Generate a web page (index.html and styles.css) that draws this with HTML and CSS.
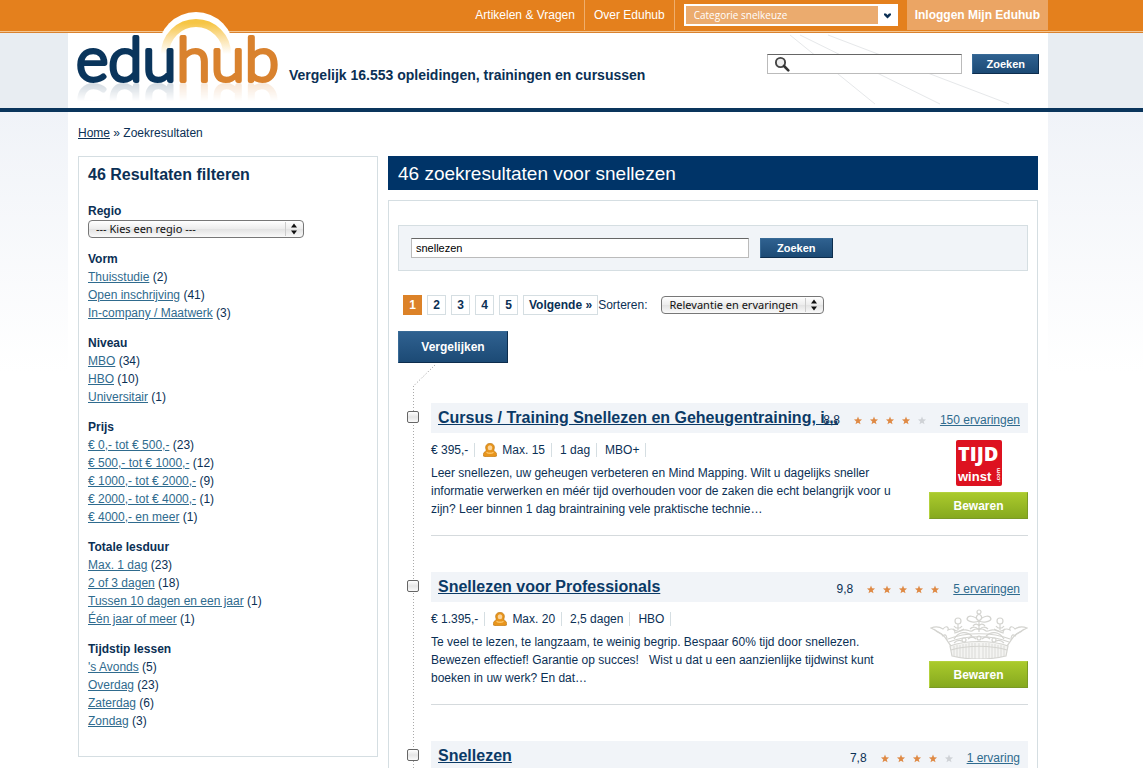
FILE: index.html
```html
<!DOCTYPE html>
<html lang="nl">
<head>
    <meta charset="UTF-8">
    <meta name="viewport" content="width=device-width, initial-scale=1.0">
    <title>Snellezen - Eduhub</title>
    <link rel="stylesheet" href="styles.css">
</head>
<body>
    <!-- icons used more than once -->
    <svg class="sprite" aria-hidden="true">
        <symbol id="star" viewBox="0 0 10 10">
            <path d="M5 0.6 6.2 3.7 9.5 3.9 6.9 6 7.8 9.3 5 7.5 2.2 9.3 3.1 6 0.5 3.9 3.8 3.7Z"/>
        </symbol>
        <symbol id="person" viewBox="0 0 14 14">
            <path d="M0.600 13.200C0 11 0.500 9.600 2 8.700 3.200 8 3.300 7.400 3 6.500 2.400 4.500 2.600 3 3.600 1.800 4.400 0.800 5.600 0.500 7 0.500S9.600 0.800 10.400 1.800C11.400 3 11.600 4.500 11 6.500 10.700 7.400 10.800 8 12 8.700 13.500 9.600 14 11 13.400 13.200 11 14 3 14 0.600 13.200Z" fill="#e8951c" stroke="#bf7a18" stroke-width="0.7"/>
            <ellipse cx="7" cy="4.700" rx="2.300" ry="2.500" fill="#fbd49a"/>
            <path d="M3.500 9.200C5.200 10.600 8.800 10.600 10.500 9.200" fill="none" stroke="#fbc468" stroke-width="1.300"/>
        </symbol>
    </svg>

    <div class="topbar">
        <div class="wrap topbar-inner">
            <nav class="topnav">
                <a href="#">Artikelen &amp; Vragen</a>
                <a href="#">Over Eduhub</a>
            </nav>
            <select class="category" aria-label="Categorie snelkeuze">
                <option>Categorie snelkeuze</option>
            </select>
            <a class="login" href="#">Inloggen Mijn Eduhub</a>
        </div>
    </div>

    <header class="header">
        <div class="wrap header-inner">
            <a class="logo" href="#">
                <svg class="logo-arc" viewBox="0 0 76 76" aria-hidden="true">
                    <defs>
                        <linearGradient id="arc" x1="0" y1="0" x2="0" y2="1">
                            <stop offset="0" stop-color="#f6c544"/>
                            <stop offset="0.45" stop-color="#fbdf9f"/>
                            <stop offset="1" stop-color="#ffffff"/>
                        </linearGradient>
                    </defs>
                    <circle cx="38" cy="38" r="38" fill="#fff"/>
                    <path d="M7 42A31 31 0 0 1 69 42" fill="none" stroke="url(#arc)" stroke-width="8"/>
                </svg>
                <svg class="logo-text" viewBox="0 0 202 48">
                    <text x="-1" y="45"><tspan class="logo-edu">edu</tspan><tspan class="logo-hub">hub</tspan></text>
                </svg>
            </a>
            <p class="tagline">Vergelijk 16.553 opleidingen, trainingen en cursussen</p>
            <form class="site-search">
                <div class="search-field">
                    <svg viewBox="0 0 16 16" aria-hidden="true">
                        <circle cx="6.5" cy="6.5" r="4.6" fill="#eee" stroke="#444" stroke-width="1.9"/>
                        <path d="M10 10 14.3 14.3" stroke="#333" stroke-width="2.6" stroke-linecap="round"/>
                    </svg>
                    <input type="text" aria-label="Zoeken">
                </div>
                <button class="btn" type="button">Zoeken</button>
            </form>
        </div>
    </header>

    <div class="page">
        <div class="wrap content">
            <p class="breadcrumb"><a href="#">Home</a> » Zoekresultaten</p>

            <div class="columns">
                <aside class="filters">
                    <h2>46 Resultaten filteren</h2>

                    <div class="filter">
                        <label for="regio">Regio</label>
                        <select class="mac-select" id="regio">
                            <option>--- Kies een regio ---</option>
                        </select>
                    </div>
                    <div class="filter">
                        <h3>Vorm</h3>
                        <ul>
                            <li><a href="#">Thuisstudie</a> (2)</li>
                            <li><a href="#">Open inschrijving</a> (41)</li>
                            <li><a href="#">In-company / Maatwerk</a> (3)</li>
                        </ul>
                    </div>
                    <div class="filter">
                        <h3>Niveau</h3>
                        <ul>
                            <li><a href="#">MBO</a> (34)</li>
                            <li><a href="#">HBO</a> (10)</li>
                            <li><a href="#">Universitair</a> (1)</li>
                        </ul>
                    </div>
                    <div class="filter">
                        <h3>Prijs</h3>
                        <ul>
                            <li><a href="#">€ 0,- tot € 500,-</a> (23)</li>
                            <li><a href="#">€ 500,- tot € 1000,-</a> (12)</li>
                            <li><a href="#">€ 1000,- tot € 2000,-</a> (9)</li>
                            <li><a href="#">€ 2000,- tot € 4000,-</a> (1)</li>
                            <li><a href="#">€ 4000,- en meer</a> (1)</li>
                        </ul>
                    </div>
                    <div class="filter">
                        <h3>Totale lesduur</h3>
                        <ul>
                            <li><a href="#">Max. 1 dag</a> (23)</li>
                            <li><a href="#">2 of 3 dagen</a> (18)</li>
                            <li><a href="#">Tussen 10 dagen en een jaar</a> (1)</li>
                            <li><a href="#">Één jaar of meer</a> (1)</li>
                        </ul>
                    </div>
                    <div class="filter">
                        <h3>Tijdstip lessen</h3>
                        <ul>
                            <li><a href="#">'s Avonds</a> (5)</li>
                            <li><a href="#">Overdag</a> (23)</li>
                            <li><a href="#">Zaterdag</a> (6)</li>
                            <li><a href="#">Zondag</a> (3)</li>
                        </ul>
                    </div>
                </aside>

                <main class="main">
                    <h1>46 zoekresultaten voor snellezen</h1>

                    <div class="panel">
                        <form class="search-box">
                            <input type="text" value="snellezen" aria-label="Zoekterm">
                            <button class="btn" type="button">Zoeken</button>
                        </form>

                        <div class="toolbar">
                            <nav class="pages">
                                <a class="current" href="#">1</a>
                                <a href="#">2</a>
                                <a href="#">3</a>
                                <a href="#">4</a>
                                <a href="#">5</a>
                                <a href="#">Volgende »</a>
                            </nav>
                            <label for="sort">Sorteren:</label>
                            <select class="mac-select" id="sort">
                                <option>Relevantie en ervaringen</option>
                            </select>
                        </div>

                        <button class="btn compare" type="button">Vergelijken</button>
                        <svg class="connector" viewBox="0 0 24 22" aria-hidden="true">
                            <path d="M22 1 0.5 22" fill="none" stroke="#999" stroke-dasharray="1 2"/>
                        </svg>

                        <div class="results">
                            <article class="result">
                                <input type="checkbox" aria-label="Vergelijk Cursus / Training Snellezen en Geheugentraining">
                                <div class="result-main">
                                    <div class="result-head">
                                        <h2><a href="#">Cursus / Training Snellezen en Geheugentraining, i...</a></h2>
                                        <div class="rating">
                                            <span>8,8</span>
                                            <span class="stars">
                                                <svg><use href="#star"/></svg><svg><use href="#star"/></svg><svg><use href="#star"/></svg><svg><use href="#star"/></svg><svg class="off"><use href="#star"/></svg>
                                            </span>
                                            <a href="#">150 ervaringen</a>
                                        </div>
                                    </div>
                                    <div class="result-body">
                                        <div class="result-text">
                                            <ul class="meta">
                                                <li>€ 395,-</li>
                                                <li><svg><use href="#person"/></svg>Max. 15</li>
                                                <li>1 dag</li>
                                                <li>MBO+</li>
                                            </ul>
                                            <p>Leer snellezen, uw geheugen verbeteren en Mind Mapping. Wilt u dagelijks sneller informatie verwerken en méér tijd overhouden voor de zaken die echt belangrijk voor u zijn? Leer binnen 1 dag braintraining vele praktische technie…</p>
                                        </div>
                                        <div class="provider">
                                            <svg class="tijdwinst" viewBox="0 0 46 46">
                                                <rect width="46" height="46" rx="2" fill="#dd1220"/>
                                                <text class="tijd" x="2" y="21">TIJD</text>
                                                <text class="winst" x="2" y="41">winst</text>
                                                <text class="com" transform="translate(44 42) rotate(-90)">.com</text>
                                            </svg>
                                            <button class="save" type="button">Bewaren</button>
                                        </div>
                                    </div>
                                </div>
                            </article>

                            <article class="result">
                                <input type="checkbox" aria-label="Vergelijk Snellezen voor Professionals">
                                <div class="result-main">
                                    <div class="result-head">
                                        <h2><a href="#">Snellezen voor Professionals</a></h2>
                                        <div class="rating">
                                            <span>9,8</span>
                                            <span class="stars">
                                                <svg><use href="#star"/></svg><svg><use href="#star"/></svg><svg><use href="#star"/></svg><svg><use href="#star"/></svg><svg><use href="#star"/></svg>
                                            </span>
                                            <a href="#">5 ervaringen</a>
                                        </div>
                                    </div>
                                    <div class="result-body">
                                        <div class="result-text">
                                            <ul class="meta">
                                                <li>€ 1.395,-</li>
                                                <li><svg><use href="#person"/></svg>Max. 20</li>
                                                <li>2,5 dagen</li>
                                                <li>HBO</li>
                                            </ul>
                                            <p>Te veel te lezen, te langzaam, te weinig begrip. Bespaar 60% tijd door snellezen. Bewezen effectief! Garantie op succes! &nbsp; Wist u dat u een aanzienlijke tijdwinst kunt boeken in uw werk? En dat…</p>
                                        </div>
                                        <div class="provider">
                                            <svg class="crown" viewBox="0 0 98 50" aria-hidden="true">
                                                <g fill="none" stroke="#d4d4d0" stroke-width="1.2">
                                                    <!-- band -->
                                                    <path d="M20 37C36 31 62 31 78 37L76 47C60 51 38 51 22 47Z" fill="#f4f4f2"/>
                                                    <path d="M19 33C36 26 62 26 79 33M18 30C36 23 62 23 80 30M21 41C38 36 60 36 77 41"/>
                                                    <path d="M24 37V47M27 36V48M30 36V48M33 35V49M36 35V49M39 34V49M42 34V49M45 34V50M49 34V50M53 34V50M56 34V49M59 34V49M62 35V49M65 35V49M68 36V48M71 36V48M74 37V47" stroke-width="0.8"/>
                                                    <!-- rim -->
                                                    <path d="M21 37C16 31 15 26 10 24 7 22 5 21 1 19 6 17 10 18 13 20 16 16 19 18 18 21 22 19 25 20 25 24 30 23 31 20 34 21 38 20 39 23 42 22 45 19 53 19 56 22 59 23 60 20 64 21 67 20 68 23 73 24 73 20 76 19 80 21 79 18 82 16 85 20 88 18 92 17 97 19 93 21 91 22 88 24 83 26 82 31 77 37"/>
                                                    <path d="M4 20C8 25 11 23 13 27 16 24 17 28 17 31M94 20C90 25 87 23 85 27 82 24 81 28 81 31M24 30C29 22 37 22 42 27M74 30C69 22 61 22 56 27"/>
                                                    <!-- side leaves -->
                                                    <circle cx="28" cy="12" r="3"/><circle cx="70" cy="12" r="3"/>
                                                    <path d="M28 15V21M24 17C26 20 30 20 32 17M23 20C26 23 31 23 34 20M70 15V21M66 17C68 20 72 20 74 17M64 20C67 23 72 23 75 20"/>
                                                    <!-- centre ornament -->
                                                    <circle cx="49" cy="3" r="2"/>
                                                    <path d="M49 5C45 7 46 11 49 12 52 11 53 7 49 5ZM49 12C44 6 38 6 37 10 38 13 45 14 49 12ZM49 12C54 6 60 6 61 10 60 13 53 14 49 12ZM49 12V23M43 17C45 14 48 15 49 17 50 15 53 14 55 17M40 20C44 16 47 19 49 21 51 19 54 16 58 20"/>
                                                    <circle cx="49" cy="29" r="2"/><circle cx="34" cy="31" r="2"/><circle cx="64" cy="31" r="2"/>
                                                    <path d="M38 30C41 27 44 28 46 30M52 30C54 28 57 27 60 30M24 34C27 31 30 31 32 32M66 32C68 31 71 31 74 34"/>
                                                </g>
                                            </svg>
                                            <button class="save" type="button">Bewaren</button>
                                        </div>
                                    </div>
                                </div>
                            </article>

                            <article class="result">
                                <input type="checkbox" aria-label="Vergelijk Snellezen">
                                <div class="result-main">
                                    <div class="result-head">
                                        <h2><a href="#">Snellezen</a></h2>
                                        <div class="rating">
                                            <span>7,8</span>
                                            <span class="stars">
                                                <svg><use href="#star"/></svg><svg><use href="#star"/></svg><svg><use href="#star"/></svg><svg><use href="#star"/></svg><svg class="off"><use href="#star"/></svg>
                                            </span>
                                            <a href="#">1 ervaring</a>
                                        </div>
                                    </div>
                                </div>
                            </article>
                        </div>
                    </div>
                </main>
            </div>
        </div>
    </div>
</body>
</html>
```

FILE: styles.css
```css
* {
    box-sizing: border-box;
}
body {
    margin: 0;
    font-family: "Liberation Sans", Arial, Helvetica, sans-serif;
    font-size: 12px;
    line-height: 18px;
    color: #0b3055;
    background: #fff;
}
h1, h2, h3, p, ul {
    margin: 0;
    padding: 0;
}
ul {
    list-style: none;
}
a {
    color: #2f6b8e;
}
input, select, button {
    margin: 0;
    font-family: inherit;
}
.sprite {
    display: none;
}
.wrap {
    max-width: 980px;
    margin-left: 68px;
}

/* top bar */
.topbar {
    height: 33px;
    background: linear-gradient(#e4801d 31px, #f3c592 31px, #f3c592 32px, #d9822e 32px);
}
.topbar-inner {
    display: flex;
    justify-content: flex-end;
    align-items: flex-start;
}
.topnav {
    display: flex;
}
.topnav a {
    padding: 6px 9px;
    line-height: 18px;
    color: #fff;
    text-decoration: none;
    border-right: 1px solid #efae6c;
}
.category {
    appearance: none;
    width: 214px;
    height: 22px;
    margin: 4px 9px 0;
    padding: 0 8px;
    font-family: "Open Sans", sans-serif;
    font-size: 10px;
    color: #fff;
    border: 2px solid #fff;
    border-radius: 0;
    background: #ebab6e url("data:image/svg+xml,%3Csvg xmlns='http://www.w3.org/2000/svg' width='18' height='18'%3E%3Crect width='18' height='18' fill='white'/%3E%3Cpath d='M6 7.5h2l1.500 1.500 1.500-1.500h2v1.500l-3.500 3.500-3.500-3.500z' fill='%230b3055'/%3E%3C/svg%3E") no-repeat right center;
}
.login {
    height: 30px;
    padding: 6px 8px;
    font-weight: bold;
    color: #fff;
    text-decoration: none;
    background: #eba564;
}

/* header */
.header {
    background: #e8edf2;
    border-bottom: 4px solid #0a355c;
}
.header-inner {
    display: flex;
    align-items: flex-end;
    height: 75px;
    padding: 0 9px 24px;
    background: #fff url("data:image/svg+xml,%3Csvg xmlns='http://www.w3.org/2000/svg' width='260' height='75'%3E%3Cg stroke='%23e6e8ea' fill='none'%3E%3Cpath d='M2 2 87 71M12 2 152 71M40 2 221 71'/%3E%3C/g%3E%3C/svg%3E") no-repeat right top;
}
.logo {
    position: relative;
    width: 202px;
    height: 48px;
}
.logo-arc {
    position: absolute;
    left: 81px;
    top: -24px;
    width: 76px;
    height: 76px;
}
.logo-text {
    position: relative;
    display: block;
    width: 202px;
    height: 48px;
    overflow: visible;
    -webkit-box-reflect: below -2px linear-gradient(transparent 60%, rgba(0, 0, 0, 0.2));
}
.logo-text text {
    font-family: Lato, sans-serif;
    font-size: 62px;
    font-weight: 300;
    stroke-width: 4;
    stroke-linejoin: round;
}
.logo-edu {
    fill: #0a355c;
    stroke: #0a355c;
}
.logo-hub {
    fill: #d9822e;
    stroke: #d9822e;
}
.tagline {
    margin-left: 10px;
    font-size: 14px;
    font-weight: bold;
}
.site-search {
    display: flex;
    gap: 10px;
    margin: 0 0 10px auto;
}
.search-field {
    display: flex;
    align-items: center;
    width: 195px;
    height: 20px;
    padding-left: 6px;
    background: #fff;
    border: 1px solid #bbb;
    border-top-color: #666;
}
.search-field svg {
    flex: none;
    width: 16px;
    height: 16px;
}
.search-field input {
    flex: 1;
    min-width: 0;
    border: 0;
    outline: 0;
    background: none;
}
.btn {
    height: 20px;
    padding: 0 13px;
    font-size: 11px;
    font-weight: bold;
    color: #fff;
    background: linear-gradient(#2f6190, #1c4a75);
    border: 1px solid #0d2d4d;
    border-top-color: #386a96;
    border-left-color: #386a96;
}

/* content */
.page {
    background: linear-gradient(#f0f3f8, #fff 260px);
}
.content {
    padding: 12px 10px 0;
    background: #fff;
}
.breadcrumb a {
    color: #0b3055;
}
.columns {
    display: grid;
    grid-template-columns: 300px 1fr;
    align-items: start;
    gap: 10px;
    margin-top: 14px;
}
.filters {
    padding: 9px 9px 26px;
    border: 1px solid #d5dee2;
}
.filters h2 {
    margin-bottom: 18px;
    font-size: 16px;
    line-height: 18px;
}
.filter {
    margin-bottom: 12px;
}
.filter:last-child {
    margin-bottom: 0;
}
.filter h3, .filter label {
    display: block;
    font-size: 12px;
    font-weight: bold;
}
.mac-select {
    appearance: none;
    display: block;
    height: 18px;
    padding: 0 25px 0 7px;
    font-family: "Noto Sans", sans-serif;
    font-size: 11px;
    line-height: 16px;
    color: #111;
    border: 1px solid #777;
    border-radius: 4px;
    background: url("data:image/svg+xml,%3Csvg xmlns='http://www.w3.org/2000/svg' width='18' height='16'%3E%3Cpath d='M.5 1v14' stroke='%23ccc'/%3E%3Cpath d='M6 6.500h6L9 2.500zM6 9.500h6l-3 4z' fill='%23111'/%3E%3C/svg%3E") no-repeat right center, linear-gradient(#fff, #ececec 50%, #e2e2e2 50%, #fafafa);
}
.filter .mac-select {
    width: 216px;
}

.main h1 {
    padding: 6px 10px 4px;
    font-size: 19px;
    font-weight: normal;
    line-height: 24px;
    color: #fff;
    background: #003468;
}
.panel {
    margin-top: 10px;
    padding: 24px 9px 0;
    border: 1px solid #d5dee2;
    border-bottom: 0;
}
.search-box {
    display: flex;
    gap: 11px;
    padding: 12px;
    background: #f1f4f8;
    border: 1px solid #d5dee2;
}
.search-box input {
    width: 338px;
    height: 20px;
    padding: 0 4px;
    font-size: 11px;
    color: #000;
    border: 1px solid #bbb;
    border-top-color: #666;
}
.search-box .btn {
    padding: 0 16px;
}
.toolbar {
    display: flex;
    align-items: center;
    margin: 24px 0 16px 5px;
}
.pages {
    display: flex;
    gap: 5px;
}
.pages a {
    min-width: 19px;
    padding: 0 5px;
    font-weight: bold;
    text-align: center;
    color: #0b3055;
    text-decoration: none;
    border: 1px solid #d5dee2;
}
.pages .current {
    color: #fff;
    background: #dc8228;
    border-color: #dc8228;
}
.toolbar .mac-select {
    margin-left: 14px;
}
.compare {
    display: block;
    width: 110px;
    height: 32px;
    font-size: 12px;
}
.connector {
    display: block;
    width: 24px;
    height: 22px;
    margin: 1px 0 0 15px;
}

/* results, dotted line runs through the checkboxes */
.results {
    padding-top: 17px;
    background: repeating-linear-gradient(#aaa 0, #aaa 1px, transparent 1px, transparent 3px) no-repeat 15px 0 / 1px 100%;
}
.result {
    display: grid;
    grid-template-columns: 33px 1fr;
    align-items: start;
}
.result > input {
    appearance: none;
    width: 12px;
    height: 12px;
    margin: 8px 0 0 9px;
    border: 1px solid #666;
    border-radius: 2px;
    background: linear-gradient(#fff, #e6e6e6 50%, #fafafa);
}
.result-head {
    display: grid;
    align-items: center;
    height: 30px;
    padding: 0 8px 0 7px;
    background: #f1f4f8;
}
.result-head h2, .rating {
    grid-area: 1 / 1;
}
.result-head h2 {
    font-size: 16px;
    line-height: 20px;
}
.result-head h2 a {
    color: #0b3a66;
}
.rating {
    display: flex;
    justify-self: end;
    padding-top: 4px;
}
.stars {
    display: flex;
    align-items: center;
    margin: 0 10px;
}
.stars svg {
    width: 16px;
    height: 9px;
    fill: #df8a45;
}
.stars .off {
    fill: #cfd2d6;
}
.result-body {
    display: flex;
    justify-content: space-between;
    margin-bottom: 36px;
    padding: 7px 0 16px;
    border-bottom: 1px solid #d5dadd;
}
.result-text {
    flex: 0 1 478px;
}
.meta {
    display: flex;
    padding: 3px 0;
}
.meta li {
    display: flex;
    align-items: center;
    height: 14px;
    margin-right: 8px;
    padding-right: 6px;
    border-right: 1px solid #d5dee2;
}
.meta svg {
    width: 14px;
    height: 14px;
    margin-right: 5px;
}
.result-text p {
    margin-top: 4px;
}
.provider {
    display: flex;
    flex-direction: column;
    align-items: center;
    justify-content: space-between;
    width: 99px;
    height: 79px;
}
.tijdwinst {
    width: 46px;
    height: 46px;
}
.tijdwinst text {
    font-weight: bold;
    fill: #fff;
}
.tijdwinst .tijd {
    font-family: "Open Sans", sans-serif;
    font-size: 20px;
    font-weight: 800;
}
.tijdwinst .winst {
    font-size: 13px;
}
.tijdwinst .com {
    font-size: 6px;
}
.crown {
    width: 98px;
    height: 50px;
}
.save {
    width: 99px;
    height: 27px;
    font-size: 12px;
    font-weight: bold;
    color: #fff;
    background: linear-gradient(#aaca2c, #86a91f);
    border: 1px solid #7a9a26;
    border-top-color: #b3d13c;
    border-left-color: #b3d13c;
}
```
